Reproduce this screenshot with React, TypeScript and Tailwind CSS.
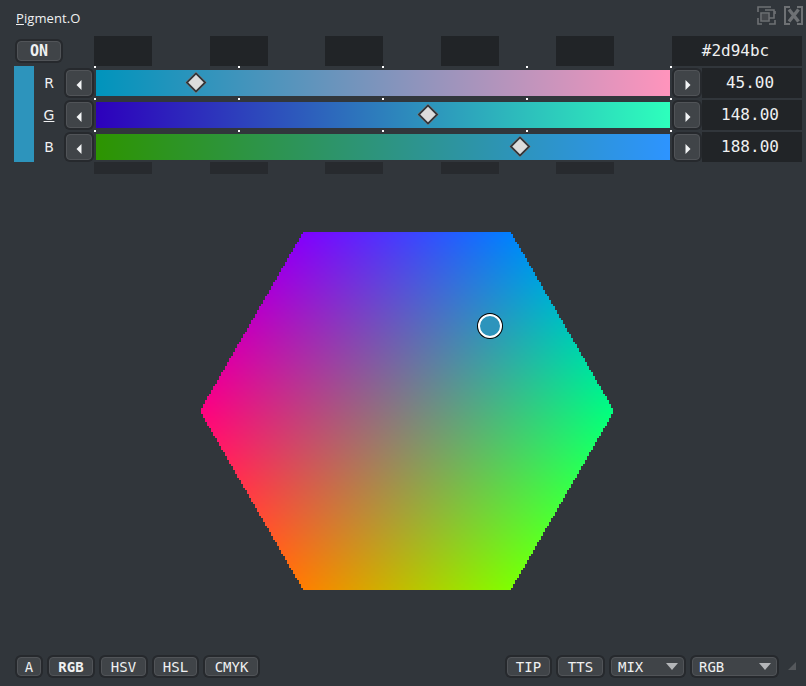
import { useEffect, useRef } from "react";

const mono = "font-['DejaVu_Sans_Mono',monospace]";
const sliders = [
  { label: "R", pos: 100, text: "45.00", from: "#0094bc", to: "#ff94bc" },
  { label: "G", pos: 332, text: "148.00", from: "#2d00bc", to: "#2dffbc" },
  { label: "B", pos: 424, text: "188.00", from: "#2d9400", to: "#2d94ff" },
];

const btn =
  "flex items-center rounded-[4px] border border-[#515458] bg-[#404448] text-[#eff0f1] shadow-[0_0_0_2px_#26292d]";

function Btn({ className = "", children }: { className?: string; children?: React.ReactNode }) {
  return <div className={`${btn} justify-center ${className}`}>{children}</div>;
}

function DarkBlocks({ className }: { className: string }) {
  return (
    <div className="ml-[94px] flex w-[520px] justify-between">
      {[0, 1, 2, 3, 4].map((i) => (
        <div key={i} className={`w-[58px] ${className}`} />
      ))}
    </div>
  );
}

function Arrow({ dir }: { dir: "left" | "right" }) {
  return (
    <svg width="6" height="10" viewBox="0 0 6 10" className="mt-[3px]">
      <path d={dir === "left" ? "M5.5 0 L0.5 5 L5.5 10 Z" : "M0.5 0 L5.5 5 L0.5 10 Z"} fill="#f2f4f5" />
    </svg>
  );
}

function Combo({ label, className }: { label: string; className: string }) {
  return (
    <div className={`${btn} justify-between pl-[6px] pr-[5px] text-[14px] ${mono} ${className}`}>
      <span>{label}</span>
      <svg width="12" height="7" viewBox="0 0 12 7">
        <path d="M0 0 H12 L6 7 Z" fill="#b4b6b9" />
      </svg>
    </div>
  );
}

function Hexagon() {
  const ref = useRef<HTMLCanvasElement>(null);

  useEffect(() => {
    const ctx = ref.current?.getContext("2d");
    if (!ctx) return;
    const img = ctx.createImageData(206, 179);
    const k = 127.5 / 178.8;
    for (let j = 0; j < 179; j++) {
      for (let i = 0; i < 206; i++) {
        // offset from the middle of the wheel, y up
        const dx = i * 2 + 1 - 206;
        const dy = 179 - (j * 2 + 1);
        const r = 127.5 + (-0.866 * dx - 0.5 * dy) * k;
        const g = 127.5 + (0.866 * dx - 0.5 * dy) * k;
        const b = 127.5 + dy * k;
        const inside = Math.min(r, g, b) >= -0.4 && Math.max(r, g, b) <= 255.4;
        const p = (j * 206 + i) * 4;
        img.data[p] = r;
        img.data[p + 1] = g;
        img.data[p + 2] = b;
        img.data[p + 3] = inside ? 255 : 0;
      }
    }
    ctx.putImageData(img, 0, 0);
  }, []);

  return (
    <canvas
      ref={ref}
      width={206}
      height={179}
      className="block h-[358px] w-[412px] [image-rendering:pixelated]"
    />
  );
}

export default function App() {
  return (
    <main className="flex h-[686px] w-[806px] flex-col overflow-hidden bg-[#31363b] font-['Open_Sans',sans-serif] text-[#eff0f1]">
      {/* title */}
      <div className="flex h-[36px] items-start justify-between pl-[16px] pr-[3px] pt-[6px]">
        <span className="pt-[3px] text-[13px] leading-[18px] tracking-[0.1px]">
          <span className="underline">P</span>igment.O
        </span>
        <div className="flex gap-[8px]">
          <svg width="19" height="19" viewBox="0 0 19 19" fill="none" stroke="#6e7174" strokeWidth="1.6">
            <path d="M1 6 V1 H14 M1 12 V18 H5 M12 18 H18 V14 M18 8 V5" />
            <path d="M8 4 H17 V12 H12" />
            <path d="M4 7 H12 V15 H4 Z" />
            <rect x="5" y="8" width="6" height="6" fill="#44474b" stroke="none" />
          </svg>
          <svg width="19" height="19" viewBox="0 0 19 19" fill="none" stroke="#6e7174" strokeWidth="2">
            <path d="M6 1 H1 V18 H6 M13 1 H18 V18 H13" />
            <path d="M5 3.5 L14.5 15.5 M14.5 3.5 L5 15.5" strokeWidth="3.4" />
          </svg>
        </div>
      </div>

      {/* header row */}
      <div className="relative flex h-[30px]">
        <div className="absolute left-[17px] top-[5px]">
          <Btn className={`h-[20px] w-[44px] text-[15px] font-bold ${mono}`}>ON</Btn>
        </div>
        <DarkBlocks className="h-[30px] bg-[#212427]" />
        <div
          className={`ml-[58px] flex h-[30px] w-[130px] items-center justify-center bg-[#212427] pr-[3px] text-[16px] ${mono}`}
        >
          #2d94bc
        </div>
      </div>

      {/* channels */}
      <div className="flex">
        <div className="ml-[14px] h-[96px] w-[20px] bg-[#2d94bc]" />
        <div className="flex flex-col">
          {sliders.map((s) => (
            <div key={s.label} className="flex h-[32px] items-start">
              <span className="mt-[8px] w-[30px] text-center font-['DejaVu_Sans',sans-serif] text-[14px] leading-[18px]">
                {s.label === "G" ? <span className="underline">G</span> : s.label}
              </span>
              <Btn className="mt-[4px] ml-[2px] h-[26px] w-[26px]">
                <Arrow dir="left" />
              </Btn>
              <div className="ml-[2px] w-[578px]">
                <div className="flex h-[2px] justify-between">
                  {[0, 1, 2, 3, 4].map((i) => (
                    <div key={i} className="h-[2px] w-[2px] bg-white" />
                  ))}
                </div>
                <div
                  className="relative mx-[2px] mt-[2px] h-[26px]"
                  style={{ background: `linear-gradient(to right, ${s.from}, ${s.to})` }}
                >
                  <div
                    className="absolute top-[5px] h-[15px] w-[15px] -translate-x-1/2 rotate-45 border-2 border-[#33363a] bg-[#dcdcdc]"
                    style={{ left: s.pos }}
                  />
                </div>
              </div>
              <Btn className="mt-[4px] ml-[2px] h-[26px] w-[26px] pl-[1px]">
                <Arrow dir="right" />
              </Btn>
              <div
                className={`mt-[2px] ml-[2px] flex h-[30px] w-[100px] items-center justify-center bg-[#212427] pr-[4px] text-[16px] ${mono}`}
              >
                {s.text}
              </div>
            </div>
          ))}
        </div>
      </div>
      <DarkBlocks className="h-[12px] bg-[#272a2e]" />

      {/* hexagon */}
      <div className="flex-1 pl-[201px] pt-[58px]">
        <div className="relative w-[412px]">
          <Hexagon />
          <div className="absolute left-[277px] top-[82px] h-[24px] w-[24px] rounded-full border-2 border-white bg-[#2d94bc] shadow-[0_0_0_1px_#000]" />
        </div>
      </div>

      {/* bottom bar */}
      <div className={`mb-[10px] flex h-[19px] items-stretch text-[14px] leading-none ${mono}`}>
        <Btn className="ml-[17px] w-[24px]">A</Btn>
        <Btn className="ml-[8px] w-[44px] font-bold">RGB</Btn>
        <Btn className="ml-[8px] w-[45px]">HSV</Btn>
        <Btn className="ml-[8px] w-[43px]">HSL</Btn>
        <Btn className="ml-[8px] w-[53px]">CMYK</Btn>
        <Btn className="ml-[249px] w-[43px]">TIP</Btn>
        <Btn className="ml-[8px] w-[45px]">TTS</Btn>
        <Combo label="MIX" className="ml-[8px] w-[73px]" />
        <Combo label="RGB" className="ml-[8px] w-[85px]" />
        <svg width="8" height="8" viewBox="0 0 8 8" className="ml-[11px] mt-[5px]">
          <path d="M8 0 V8 H0 Z" fill="#55585c" />
        </svg>
      </div>
    </main>
  );
}
